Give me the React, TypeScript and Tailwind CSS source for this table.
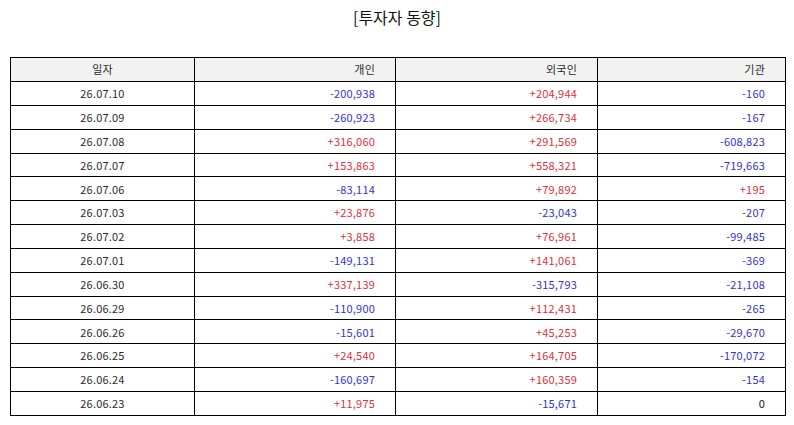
const rows: [string, string, string, string][] = [
  ["26.07.10", "-200,938", "+204,944", "-160"],
  ["26.07.09", "-260,923", "+266,734", "-167"],
  ["26.07.08", "+316,060", "+291,569", "-608,823"],
  ["26.07.07", "+153,863", "+558,321", "-719,663"],
  ["26.07.06", "-83,114", "+79,892", "+195"],
  ["26.07.03", "+23,876", "-23,043", "-207"],
  ["26.07.02", "+3,858", "+76,961", "-99,485"],
  ["26.07.01", "-149,131", "+141,061", "-369"],
  ["26.06.30", "+337,139", "-315,793", "-21,108"],
  ["26.06.29", "-110,900", "+112,431", "-265"],
  ["26.06.26", "-15,601", "+45,253", "-29,670"],
  ["26.06.25", "+24,540", "+164,705", "-170,072"],
  ["26.06.24", "-160,697", "+160,359", "-154"],
  ["26.06.23", "+11,975", "-15,671", "0"],
];

function tone(v: string) {
  if (v.startsWith("+")) return "text-[#e0303a]";
  if (v.startsWith("-")) return "text-[#3232d2]";
  return "text-[#222]";
}

export default function App() {
  return (
    <div className="w-[794px] h-[425px] bg-white font-['Noto_Sans_CJK_KR',sans-serif] text-[#2a2a2a]">
      <h1 className="h-[57px] pt-[5px] text-center text-[16px] leading-[24px] text-[#111]">[투자자 동향]</h1>
      <table className="ml-[10px] w-[775px] border-collapse table-fixed text-[11px] tracking-[0.2px]">
        <colgroup>
          <col className="w-[184px]" />
          <col className="w-[201px]" />
          <col className="w-[202px]" />
          <col className="w-[188px]" />
        </colgroup>
        <thead>
          <tr className="h-[24px] bg-[#f2f2f2]">
            <th className="border-[1.5px] border-black font-normal text-center">일자</th>
            <th className="border-[1.5px] border-black font-normal text-right pr-[20px]">개인</th>
            <th className="border-[1.5px] border-black font-normal text-right pr-[20px]">외국인</th>
            <th className="border-[1.5px] border-black font-normal text-right pr-[20px]">기관</th>
          </tr>
        </thead>
        <tbody>
          {rows.map((r) => (
            <tr key={r[0]} className="h-[23.85px]">
              <td className="border-[1.5px] border-black text-center">{r[0]}</td>
              <td className={`border-[1.5px] border-black text-right pr-[20px] ${tone(r[1])}`}>{r[1]}</td>
              <td className={`border-[1.5px] border-black text-right pr-[20px] ${tone(r[2])}`}>{r[2]}</td>
              <td className={`border-[1.5px] border-black text-right pr-[20px] ${tone(r[3])}`}>{r[3]}</td>
            </tr>
          ))}
        </tbody>
      </table>
    </div>
  );
}
